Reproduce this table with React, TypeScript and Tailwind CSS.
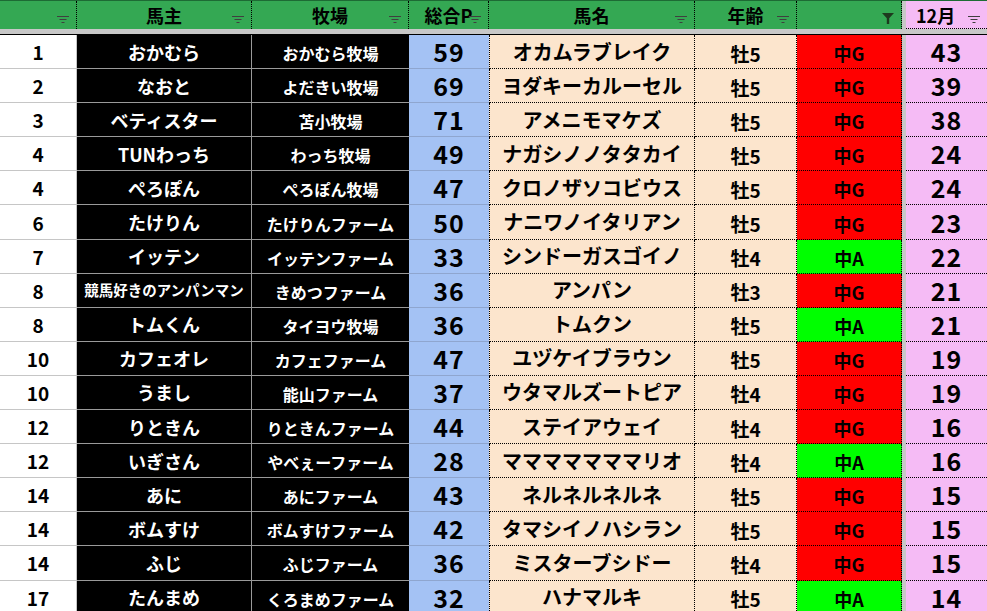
import React from 'react';

type Row = {
  rank: number;
  owner: string;
  farm: string;
  total: number;
  horse: string;
  age: string;
  cls: string;
  dec: number;
};

const rows: Row[] = [
  { rank: 1, owner: 'おかむら', farm: 'おかむら牧場', total: 59, horse: 'オカムラブレイク', age: '牡5', cls: '中G', dec: 43 },
  { rank: 2, owner: 'なおと', farm: 'よだきい牧場', total: 69, horse: 'ヨダキーカルーセル', age: '牡5', cls: '中G', dec: 39 },
  { rank: 3, owner: 'ベティスター', farm: '苫小牧場', total: 71, horse: 'アメニモマケズ', age: '牡5', cls: '中G', dec: 38 },
  { rank: 4, owner: 'TUNわっち', farm: 'わっち牧場', total: 49, horse: 'ナガシノノタタカイ', age: '牡5', cls: '中G', dec: 24 },
  { rank: 4, owner: 'ぺろぽん', farm: 'ぺろぽん牧場', total: 47, horse: 'クロノザソコビウス', age: '牡5', cls: '中G', dec: 24 },
  { rank: 6, owner: 'たけりん', farm: 'たけりんファーム', total: 50, horse: 'ナニワノイタリアン', age: '牡5', cls: '中G', dec: 23 },
  { rank: 7, owner: 'イッテン', farm: 'イッテンファーム', total: 33, horse: 'シンドーガスゴイノ', age: '牡4', cls: '中A', dec: 22 },
  { rank: 8, owner: '競馬好きのアンパンマン', farm: 'きめつファーム', total: 36, horse: 'アンパン', age: '牡3', cls: '中G', dec: 21 },
  { rank: 8, owner: 'トムくん', farm: 'タイヨウ牧場', total: 36, horse: 'トムクン', age: '牡5', cls: '中A', dec: 21 },
  { rank: 10, owner: 'カフェオレ', farm: 'カフェファーム', total: 47, horse: 'ユヅケイブラウン', age: '牡5', cls: '中G', dec: 19 },
  { rank: 10, owner: 'うまし', farm: '能山ファーム', total: 37, horse: 'ウタマルズートピア', age: '牡4', cls: '中G', dec: 19 },
  { rank: 12, owner: 'りときん', farm: 'りときんファーム', total: 44, horse: 'ステイアウェイ', age: '牡4', cls: '中G', dec: 16 },
  { rank: 12, owner: 'いぎさん', farm: 'やべぇーファーム', total: 28, horse: 'マママママママリオ', age: '牡4', cls: '中A', dec: 16 },
  { rank: 14, owner: 'あに', farm: 'あにファーム', total: 43, horse: 'ネルネルネルネ', age: '牡5', cls: '中G', dec: 15 },
  { rank: 14, owner: 'ボムすけ', farm: 'ボムすけファーム', total: 42, horse: 'タマシイノハシラン', age: '牡5', cls: '中G', dec: 15 },
  { rank: 14, owner: 'ふじ', farm: 'ふじファーム', total: 36, horse: 'ミスターブシドー', age: '牡4', cls: '中G', dec: 15 },
  { rank: 17, owner: 'たんまめ', farm: 'くろまめファーム', total: 32, horse: 'ハナマルキ', age: '牡5', cls: '中A', dec: 14 },
];

const cols = 'grid grid-cols-[77px_175px_157px_80px_206px_102px_105px_4px_81px]';

// small "sort/filter" marker in the header cells
const FilterMark = () => (
  <svg width="12" height="8" viewBox="0 0 12 8" className="absolute right-[7px] top-[14px]">
    <path d="M0 1.5h12M2.5 4.5h7M4.5 7.5h3" stroke="#3f3f3f" strokeWidth="1" />
  </svg>
);

const FunnelMark = () => (
  <svg width="12" height="11" viewBox="0 0 12 11" className="absolute right-[7px] top-[12px]">
    <path d="M0 0h12L7.2 5.2V11H4.8V5.2Z" fill="#1e3a1e" />
  </svg>
);

const HeadCell = ({ label, children }: { label?: string; children?: React.ReactNode }) => (
  <div className="relative flex items-center justify-center border-r border-dotted border-black bg-[#34a853] text-[18px] font-bold leading-none text-black">
    {label}
    {children ?? <FilterMark />}
  </div>
);

const App = () => {
  return (
    <div
      className="w-[987px] h-[611px] overflow-hidden bg-white"
      style={{ fontFamily: '"Noto Sans CJK JP", "Noto Sans", sans-serif' }}
    >
      {/* header */}
      <div className={`${cols} h-[29px] border-t border-[#1d6b34]`}>
        <HeadCell />
        <HeadCell label="馬主" />
        <HeadCell label="牧場" />
        <HeadCell label="総合P" />
        <HeadCell label="馬名" />
        <HeadCell label="年齢" />
        <HeadCell>
          <FunnelMark />
        </HeadCell>
        <div className="bg-[#c8c8c8]" />
        <div className="relative flex items-center border-b border-dotted border-black bg-[#f5bbf5] pl-[10px] text-[18px] font-bold leading-none text-black">
          12月
          <FilterMark />
        </div>
      </div>
      <div className="h-[5px] bg-[#c8c8c8]" />

      {/* body */}
      <div className="border-t border-black">
        {rows.map((r, i) => (
          <div key={i} className={`${cols} h-[34.1px] font-bold leading-none text-black`}>
            <div className="flex items-center justify-center border-b border-r border-[#c6c6c6] bg-white text-[19px]">
              {r.rank}
            </div>
            <div
              className={`flex items-center justify-center whitespace-nowrap border-b border-r border-[#9a9a9a] bg-black text-white ${
                r.owner.length > 8 ? 'text-[14.5px]' : 'text-[18px]'
              }`}
            >
              {r.owner}
            </div>
            <div className="flex items-center justify-center whitespace-nowrap border-b border-[#9a9a9a] bg-black pt-[3px] text-[16px] text-white">
              {r.farm}
            </div>
            <div className="flex items-center justify-center border-b border-[#8fa6cf] bg-[#a4c2f4] text-[25px] tracking-[1px]">
              {r.total}
            </div>
            <div className="flex items-center justify-center whitespace-nowrap border-b border-l border-r border-dotted border-black bg-[#fce5cd] text-[20px]">
              {r.horse}
            </div>
            <div className="flex items-center justify-center border-b border-r border-dotted border-black bg-[#fce5cd] pt-[3px] text-[19px]">
              {r.age}
            </div>
            <div
              className={`flex items-center justify-center border-b border-r border-dotted border-black pt-[3px] text-[18px] ${
                r.cls === '中A' ? 'bg-[#00ff00]' : 'bg-[#ff0000]'
              }`}
            >
              {r.cls}
            </div>
            <div className="bg-[#c8c8c8]" />
            <div className="flex items-center justify-center border-b border-dotted border-black bg-[#f5bbf5] text-[25px] tracking-[1px]">
              {r.dec}
            </div>
          </div>
        ))}
      </div>
    </div>
  );
};

export default App;
